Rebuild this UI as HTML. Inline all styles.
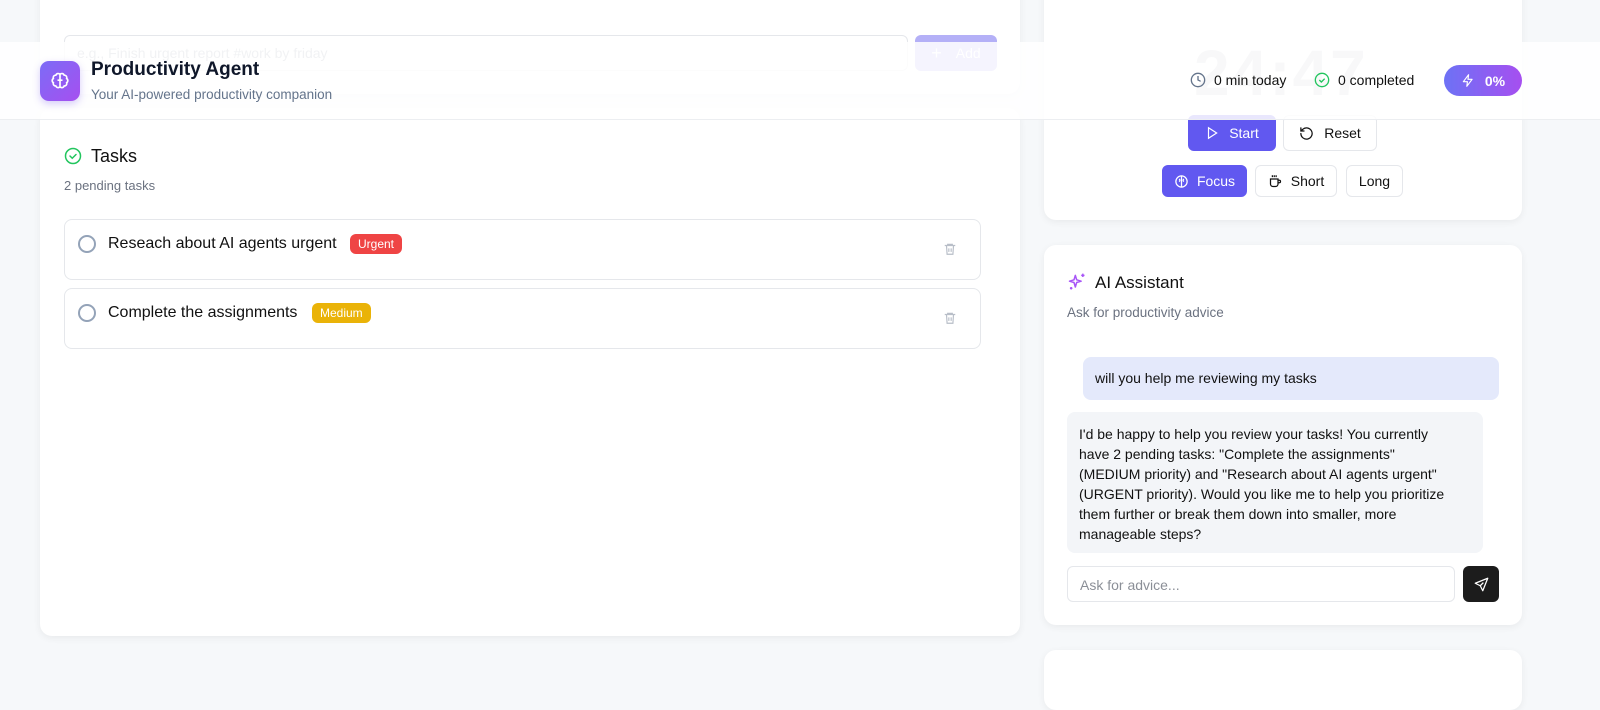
<!DOCTYPE html>
<html><head><meta charset="utf-8"><style>
*{box-sizing:border-box;margin:0;padding:0}
body{width:1600px;height:668px;overflow:hidden;background:#f6f8fa;font-family:"Liberation Sans",sans-serif;position:relative;color:#111}
.card{position:absolute;background:#fff;border-radius:12px;box-shadow:0 2px 8px rgba(0,0,0,.06)}
.abs{position:absolute}
.btn{position:absolute;border:1px solid #e5e7eb;border-radius:6px;background:#fff;font-size:14px;display:flex;align-items:center;justify-content:center;gap:10px;color:#111}
.btn.p{background:#6158f0;color:#fff;border-color:#6158f0}
svg{display:block}
</style></head><body>

<div class="card" style="left:40px;top:-20px;width:980px;height:114px">
  <div class="abs" style="left:24px;top:55px;width:844px;height:36px;border:1px solid #e5e7eb;border-radius:6px;padding:9px 12px;font-size:14px;color:#9ca3af">e.g., Finish urgent report #work by friday</div>
  <div class="abs" style="left:875px;top:55px;width:82px;height:36px;border-radius:6px;background:#b4b0f7;color:#fff;font-size:14px;display:flex;align-items:center;justify-content:center;gap:14px"><span style="font-size:18px">+</span>Add</div>
</div>

<div class="card" style="left:40px;top:108px;width:980px;height:528px">
  <div class="abs" style="left:24px;top:39px">
    <svg width="18" height="18" viewBox="0 0 24 24" fill="none" stroke="#22c55e" stroke-width="2" stroke-linecap="round"><circle cx="12" cy="12" r="10"/><path d="M8 12l3 3 5-5"/></svg></div>
  <div class="abs" style="left:51px;top:38px;font-size:18px">Tasks</div>
  <div class="abs" style="left:24px;top:70px;font-size:13px;color:#6b7280">2 pending tasks</div>
  <div class="abs" style="left:24px;top:111px;width:917px;height:61px;border:1px solid #e5e7eb;border-radius:8px">
    <div class="abs" style="left:13px;top:15px;width:18px;height:18px;border:2px solid #94a3b8;border-radius:50%"></div>
    <div class="abs" style="left:43px;top:15px;font-size:16px">Reseach about AI agents urgent</div>
    <div class="abs" style="left:285px;top:14px;height:20px;padding:0 8px;background:#ef4444;color:#fff;border-radius:6px;font-size:12px;line-height:20px">Urgent</div>
    <div class="abs" style="left:878px;top:21px"><svg width="14" height="16" viewBox="0 0 24 24" fill="none" stroke="#b8bec8" stroke-width="2"><path d="M3 6h18M8 6V4h8v2M6 6l1 15h10l1-15M10 11v6M14 11v6"/></svg></div>
  </div>
  <div class="abs" style="left:24px;top:180px;width:917px;height:61px;border:1px solid #e5e7eb;border-radius:8px">
    <div class="abs" style="left:13px;top:15px;width:18px;height:18px;border:2px solid #94a3b8;border-radius:50%"></div>
    <div class="abs" style="left:43px;top:15px;font-size:16px">Complete the assignments</div>
    <div class="abs" style="left:247px;top:14px;height:20px;padding:0 8px;background:#eab308;color:#fff;border-radius:6px;font-size:12px;line-height:20px">Medium</div>
    <div class="abs" style="left:878px;top:21px"><svg width="14" height="16" viewBox="0 0 24 24" fill="none" stroke="#b8bec8" stroke-width="2"><path d="M3 6h18M8 6V4h8v2M6 6l1 15h10l1-15M10 11v6M14 11v6"/></svg></div>
  </div>
</div>

<div class="card" style="left:1044px;top:-20px;width:478px;height:240px">
  <div class="abs" style="left:150px;top:56px;font-size:64px;font-weight:bold;color:#c9ccd2;letter-spacing:2px">24:47</div>
  <div class="btn p" style="left:144px;top:135px;width:88px;height:36px"><svg width="14" height="16" viewBox="0 0 24 24" fill="none" stroke="#fff" stroke-width="2"><path d="M6 3l14 9-14 9z"/></svg>Start</div>
  <div class="btn" style="left:239px;top:135px;width:94px;height:36px"><svg width="15" height="15" viewBox="0 0 24 24" fill="none" stroke="#111" stroke-width="2" stroke-linecap="round"><path d="M3 12a9 9 0 1 0 3-6.7L3 8M3 3v5h5"/></svg>Reset</div>
  <div class="btn p" style="left:118px;top:185px;width:85px;height:32px;gap:8px"><svg width="15" height="15" viewBox="0 0 24 24" fill="none" stroke="#fff" stroke-width="2"><circle cx="12" cy="12" r="9"/><path d="M12 3v18M8 8c2 1 2 3 0 4M16 8c-2 1-2 3 0 4"/></svg>Focus</div>
  <div class="btn" style="left:211px;top:185px;width:82px;height:32px;gap:8px"><svg width="15" height="15" viewBox="0 0 24 24" fill="none" stroke="#111" stroke-width="2"><path d="M4 8h12v8a4 4 0 0 1-4 4H8a4 4 0 0 1-4-4zM16 10h2a2 2 0 0 1 0 4h-2M7 2v3M10 2v3M13 2v3"/></svg>Short</div>
  <div class="btn" style="left:302px;top:185px;width:57px;height:32px">Long</div>
</div>

<div class="card" style="left:1044px;top:245px;width:478px;height:380px">
  <div class="abs" style="left:23px;top:27px"><svg width="20" height="20" viewBox="0 0 24 24" fill="none" stroke="#a855f7" stroke-width="1.8" stroke-linejoin="round"><path d="M10 4l1.6 5.4L17 11l-5.4 1.6L10 18l-1.6-5.4L3 11l5.4-1.6z"/><path d="M19 2v4M17 4h4M5 18v3M3.5 19.5h3"/></svg></div>
  <div class="abs" style="left:51px;top:28px;font-size:17px">AI Assistant</div>
  <div class="abs" style="left:23px;top:60px;font-size:13.5px;color:#6b7280">Ask for productivity advice</div>
  <div class="abs" style="left:39px;top:112px;width:416px;height:43px;background:#e4e9fb;border-radius:8px;padding:13px 12px;font-size:14px">will you help me reviewing my tasks</div>
  <div class="abs" style="left:23px;top:167px;width:416px;height:141px;background:#f3f5f8;border-radius:8px;padding:12px 24px 12px 12px;font-size:14px;line-height:20px">I'd be happy to help you review your tasks! You currently have 2 pending tasks: "Complete the assignments" (MEDIUM priority) and "Research about AI agents urgent" (URGENT priority). Would you like me to help you prioritize them further or break them down into smaller, more manageable steps?</div>
  <div class="abs" style="left:23px;top:321px;width:388px;height:36px;border:1px solid #e5e7eb;border-radius:6px;padding:10px 12px;font-size:14px;color:#8b8f97">Ask for advice...</div>
  <div class="abs" style="left:419px;top:321px;width:36px;height:36px;background:#1c1c1c;border-radius:6px;display:flex;align-items:center;justify-content:center"><svg width="15" height="15" viewBox="0 0 24 24" fill="none" stroke="#fff" stroke-width="2" stroke-linejoin="round"><path d="M22 2L2 10l8 4 4 8z M10 14l5-5"/></svg></div>
</div>
<div class="card" style="left:1044px;top:650px;width:478px;height:60px"></div>

<div class="abs" style="left:0;top:42px;width:1600px;height:78px;background:rgba(255,255,255,0.86);border-bottom:1px solid #eceef1">
  <div class="abs" style="left:40px;top:19px;width:40px;height:40px;border-radius:9px;background:linear-gradient(135deg,#7c6cf6,#a64ff0);display:flex;align-items:center;justify-content:center;box-shadow:0 3px 8px rgba(124,90,240,.3)"><svg width="20" height="20" viewBox="0 0 24 24" fill="none" stroke="#fff" stroke-width="2"><path d="M12 4a3 3 0 0 0-5 1 3 3 0 0 0-3 4 3 3 0 0 0 0 5 3 3 0 0 0 3 4 3 3 0 0 0 5 1zM12 4a3 3 0 0 1 5 1 3 3 0 0 1 3 4 3 3 0 0 1 0 5 3 3 0 0 1-3 4 3 3 0 0 1-5 1M12 4v16M9 11h6"/></svg></div>
  <div class="abs" style="left:91px;top:17px;font-size:19px;font-weight:bold;color:#0f172a">Productivity Agent</div>
  <div class="abs" style="left:91px;top:45px;font-size:13.5px;color:#64748b">Your AI-powered productivity companion</div>
  <div class="abs" style="left:1190px;top:30px"><svg width="16" height="16" viewBox="0 0 24 24" fill="none" stroke="#64748b" stroke-width="2"><circle cx="12" cy="12" r="10"/><path d="M12 6v6l4 2"/></svg></div>
  <div class="abs" style="left:1214px;top:30px;font-size:14px">0 min today</div>
  <div class="abs" style="left:1314px;top:30px"><svg width="16" height="16" viewBox="0 0 24 24" fill="none" stroke="#22c55e" stroke-width="2"><circle cx="12" cy="12" r="10"/><path d="M8 12l3 3 5-5"/></svg></div>
  <div class="abs" style="left:1338px;top:30px;font-size:14px">0 completed</div>
  <div class="abs" style="left:1444px;top:23px;width:78px;height:31px;border-radius:16px;background:linear-gradient(90deg,#6d72f5,#a64ff0);color:#fff;font-size:14px;font-weight:bold;display:flex;align-items:center;justify-content:center;gap:10px"><svg width="14" height="15" viewBox="0 0 24 24" fill="none" stroke="#fff" stroke-width="2" stroke-linejoin="round"><path d="M13 2L4 14h7l-1 8 9-12h-7z"/></svg>0%</div>
</div>
</body></html>
